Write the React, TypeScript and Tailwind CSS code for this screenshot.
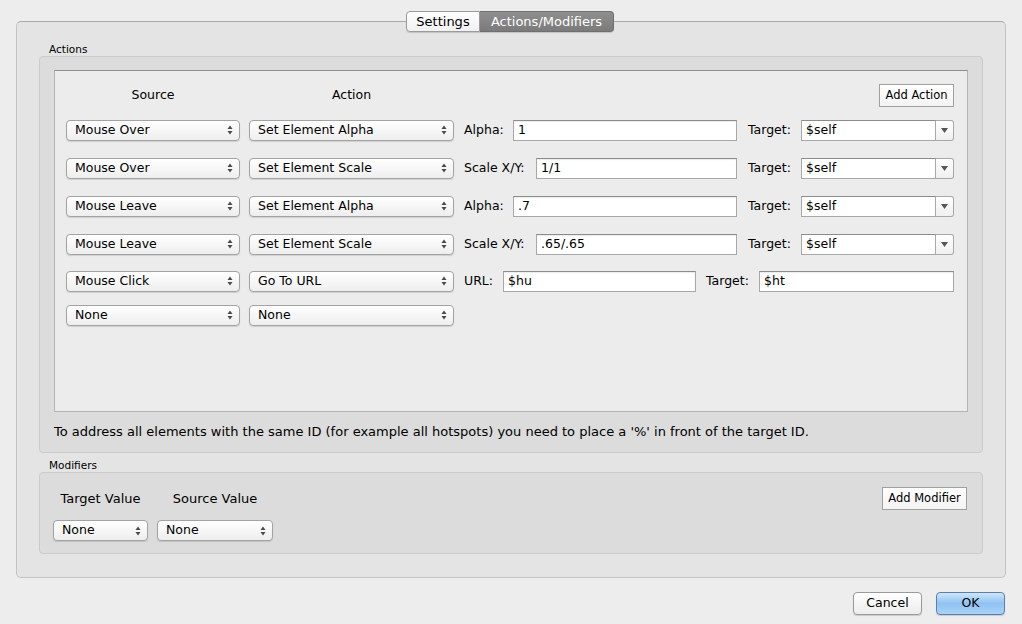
import React from 'react';

const rows = [
  { source: 'Mouse Over', action: 'Set Element Alpha', label: 'Alpha:', labelW: 'w-[49px]', inputW: 'w-[224px]', value: '1', target: '$self' },
  { source: 'Mouse Over', action: 'Set Element Scale', label: 'Scale X/Y:', labelW: 'w-[72px]', inputW: 'w-[201px]', value: '1/1', target: '$self' },
  { source: 'Mouse Leave', action: 'Set Element Alpha', label: 'Alpha:', labelW: 'w-[49px]', inputW: 'w-[224px]', value: '.7', target: '$self' },
  { source: 'Mouse Leave', action: 'Set Element Scale', label: 'Scale X/Y:', labelW: 'w-[72px]', inputW: 'w-[201px]', value: '.65/.65', target: '$self' },
];

function Arrows() {
  return (
    <svg width="6" height="10" viewBox="0 0 6 10" className="shrink-0">
      <path d="M3 0.5 L5.5 4 L0.5 4 Z" fill="#4a4a4a" />
      <path d="M3 9.5 L5.5 6 L0.5 6 Z" fill="#4a4a4a" />
    </svg>
  );
}

function Select({ value, className }: { value: string; className: string }) {
  return (
    <div
      className={`${className} h-[21px] rounded-[4px] border border-[#a3a3a3] bg-gradient-to-b from-white to-[#eeeeee] shadow-[0_1px_1px_rgba(0,0,0,0.12)] flex items-center justify-between pl-[8px] pr-[6px] text-[12.5px] text-black`}
    >
      <span className="leading-none">{value}</span>
      <Arrows />
    </div>
  );
}

function Input({ value, className }: { value: string; className: string }) {
  return (
    <div className={`${className} h-[21px] border border-[#a8a8a8] border-t-[#8c8c8c] bg-white flex items-center pl-[4px] text-[12.5px] text-black shadow-[inset_0_1px_1px_rgba(0,0,0,0.08)]`}>
      {value}
    </div>
  );
}

function Combo({ value }: { value: string }) {
  return (
    <div className="w-[153px] h-[21px] flex">
      <div className="flex-1 border border-[#a8a8a8] border-t-[#8c8c8c] bg-white flex items-center pl-[4px] text-[12.5px] text-black">
        {value}
      </div>
      <div className="w-[18px] border border-l-0 border-[#a8a8a8] rounded-r-[3px] bg-gradient-to-b from-white to-[#f0f0f0] flex items-center justify-center">
        <svg width="7" height="5" viewBox="0 0 7 5">
          <path d="M0 0 L7 0 L3.5 5 Z" fill="#555" />
        </svg>
      </div>
    </div>
  );
}

function Label({ children, className }: { children: React.ReactNode; className: string }) {
  return <div className={`${className} shrink-0 text-[12.5px] text-black`}>{children}</div>;
}

function PlainButton({ children, className }: { children: React.ReactNode; className: string }) {
  return (
    <div className={`${className} h-[23px] border border-[#a0a0a0] bg-gradient-to-b from-white to-[#f3f3f3] flex items-center justify-center text-[11.5px] text-black`}>
      {children}
    </div>
  );
}

export default function App() {
  return (
    <div className="w-[1022px] h-[624px] bg-[#ededed] font-['DejaVu_Sans',sans-serif] overflow-hidden">
      {/* tabs */}
      <div className="pt-[11px] flex justify-center relative z-10">
        <div className="flex h-[21px] ml-[-2px] shadow-[0_1px_1px_rgba(0,0,0,0.15)] rounded-[4px]">
          <div className="w-[74px] border border-[#9b9b9b] rounded-l-[4px] bg-gradient-to-b from-white to-[#f1f1f1] flex items-center justify-center text-[13px] text-black">
            Settings
          </div>
          <div className="w-[134px] border border-l-0 border-[#6f6f6f] rounded-r-[4px] bg-gradient-to-b from-[#8f8f8f] to-[#7b7b7b] flex items-center justify-center text-[13px] text-white">
            Actions/Modifiers
          </div>
        </div>
      </div>

      {/* tab box */}
      <div className="ml-[16px] w-[990px] h-[557px] mt-[-11px] border border-[#c3c3c3] border-t-[#aaaaaa] rounded-[5px] bg-[#e4e4e4] px-[22px] pt-[20px]">
        <div className="ml-[10px] h-[14px] text-[10.5px] leading-[14px] text-black">Actions</div>
        <div className="h-[397px] border border-[#cbcbcb] rounded-[4px] bg-[#dcdcdc] px-[14px] pt-[13px]">
          <div className="h-[342px] border border-[#b3b3b3] border-t-[#8e8e8e] bg-[#ececec] pl-[11px] pr-[13px] pt-[12px]">
            <div className="flex h-[23px] items-center">
              <div className="w-[174px] pt-[2px] text-center text-[12.5px] text-black">Source</div>
              <div className="w-[205px] ml-[9px] pt-[2px] text-center text-[12.5px] text-black">Action</div>
              <div className="flex-1" />
              <PlainButton className="w-[75px] mt-[2px]">Add Action</PlainButton>
            </div>
            <div className="mt-[14px] flex flex-col gap-[18px]">
              {rows.map((r, i) => (
                <div key={i} className="flex items-center h-[20px]">
                  <Select value={r.source} className="w-[174px]" />
                  <Select value={r.action} className="w-[205px] ml-[9px]" />
                  <Label className={`${r.labelW} ml-[10px]`}>{r.label}</Label>
                  <Input value={r.value} className={r.inputW} />
                  <Label className="w-[53px] ml-[11px]">Target:</Label>
                  <Combo value={r.target} />
                </div>
              ))}
              <div className="flex items-center h-[20px] mt-[-1px]">
                <Select value="Mouse Click" className="w-[174px]" />
                <Select value="Go To URL" className="w-[205px] ml-[9px]" />
                <Label className="w-[39px] ml-[10px]">URL:</Label>
                <Input value="$hu" className="w-[193px]" />
                <Label className="w-[53px] ml-[10px]">Target:</Label>
                <Input value="$ht" className="w-[195px]" />
              </div>
            </div>
            <div className="mt-[14px] flex items-center h-[20px]">
              <Select value="None" className="w-[174px]" />
              <Select value="None" className="w-[205px] ml-[9px]" />
            </div>
          </div>
          <div className="mt-[12px] text-[13px] leading-[16px] text-black">
            To address all elements with the same ID (for example all hotspots) you need to place a '%' in front of the target ID.
          </div>
        </div>

        <div className="ml-[10px] mt-[5px] h-[14px] text-[10.5px] leading-[14px] text-black">Modifiers</div>
        <div className="h-[82px] border border-[#cbcbcb] rounded-[4px] bg-[#dcdcdc] pl-[13px] pr-[15px] pt-[14px] flex justify-between">
          <div className="flex gap-[9px]">
            <div className="w-[95px] flex flex-col items-center">
              <div className="h-[23px] pt-[1px] flex items-center whitespace-nowrap text-[13px] text-black">Target Value</div>
              <Select value="None" className="w-[95px] mt-[10px]" />
            </div>
            <div className="w-[116px] flex flex-col items-center">
              <div className="h-[23px] pt-[1px] flex items-center whitespace-nowrap text-[13px] text-black">Source Value</div>
              <Select value="None" className="w-[116px] mt-[10px]" />
            </div>
          </div>
          <PlainButton className="w-[85px]">Add Modifier</PlainButton>
        </div>
      </div>

      {/* dialog buttons */}
      <div className="mt-[14px] mr-[17px] flex justify-end gap-[14px]">
        <div className="w-[69px] h-[23px] rounded-[4px] border border-[#9a9a9a] bg-gradient-to-b from-white to-[#ececec] shadow-[0_1px_1px_rgba(0,0,0,0.15)] flex items-center justify-center text-[12.5px] text-black">
          Cancel
        </div>
        <div className="w-[69px] h-[23px] rounded-[4px] border border-[#5d7fae] bg-gradient-to-b from-[#cfe5fb] via-[#8fc2f3] to-[#a9d3f7] shadow-[0_1px_1px_rgba(0,0,0,0.15)] flex items-center justify-center text-[12.5px] text-black">
          OK
        </div>
      </div>
    </div>
  );
}
